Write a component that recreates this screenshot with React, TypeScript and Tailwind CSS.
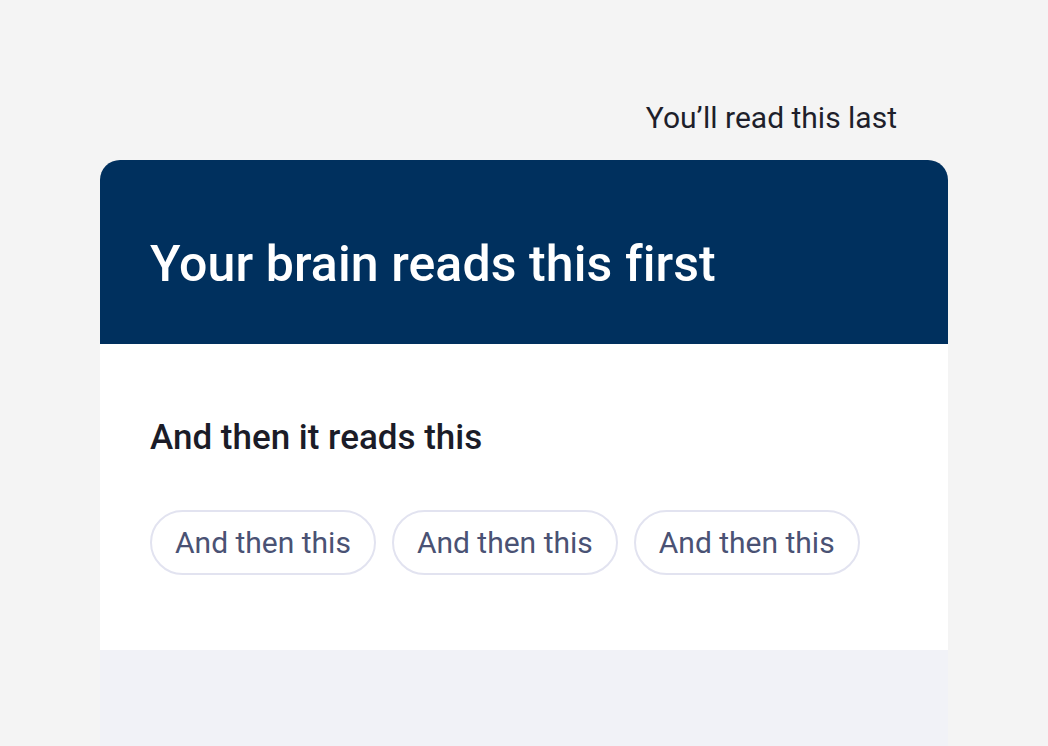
export default function App() {
  const chips = ["And then this", "And then this", "And then this"];
  return (
    <div
      className="min-h-screen bg-[#f4f4f4] px-[100px] pt-[96px]"
      style={{ fontFamily: "Roboto, 'Noto Sans', sans-serif" }}
    >
      <div className="flex justify-end pr-[51px] pb-[20px]">
        <span className="text-[30px] leading-[44px] text-[#1e1f2b]">You’ll read this last</span>
      </div>
      <div className="w-[848px]">
        <div className="rounded-t-[20px] bg-[#00305e] h-[184px] px-[50px] flex items-center">
          <h1 className="text-[50px] font-medium text-white leading-none pt-[24px] tracking-[0.1px]">
            Your brain reads this first
          </h1>
        </div>
        <div className="bg-white h-[306px] px-[50px] pt-[74px]">
          <h2 className="text-[35px] font-medium text-[#1b1c28] leading-[40px]">And then it reads this</h2>
          <div className="flex gap-[16px] mt-[52px]">
            {chips.map((c, i) => (
              <div
                key={i}
                className="h-[65px] px-[23px] rounded-full border-2 border-[#e2e3f0] flex items-center text-[30px] text-[#4a5274]"
              >
                {c}
              </div>
            ))}
          </div>
        </div>
        <div className="bg-[#f1f2f7] h-[120px]" />
      </div>
    </div>
  );
}
